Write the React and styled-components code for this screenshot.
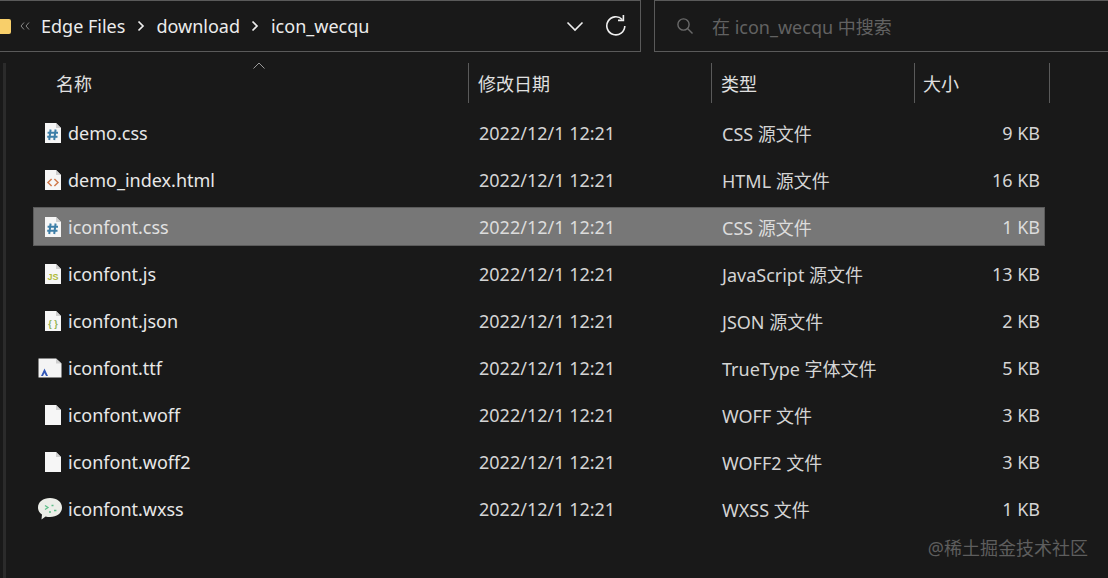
import React from "react";
import styled, { createGlobalStyle } from "styled-components";

const Global = createGlobalStyle`
  html, body { margin: 0; padding: 0; background: #191919; }
  * { box-sizing: border-box; }
`;
const FONT = `"Noto Sans", "Noto Sans CJK SC", sans-serif`;

const Page = styled.div`
  position: relative;
  width: 1108px;
  height: 578px;
  overflow: hidden;
  background: #191919;
  color: #e6e6e6;
  font-family: ${FONT};
  font-size: 18px;
`;
const Toolbar = styled.div`
  display: flex;
  gap: 13px;
  height: 52px;
`;
const AddressBar = styled.div`
  width: 641px;
  height: 52px;
  border: 1px solid #5a5a5a;
  border-left: none;
  display: flex;
  align-items: center;
  padding: 0 13px 0 0;
  margin-top: 0;
`;
const FolderMark = styled.div`
  width: 11px;
  height: 15px;
  background: #f8cf6a;
  border-radius: 0 2px 2px 0;
  margin-top: 1px;
`;
const Crumbs = styled.div`
  display: flex;
  align-items: center;
  flex: 1;
  margin-left: 9px;
`;
const Crumb = styled.span`
  font-size: 18px;
  color: #ececec;
`;
const Sep = styled.span`
  display: inline-flex;
  width: 31px;
  justify-content: center;
`;
const BackMark = styled.span`
  display: inline-flex;
  width: 21px;
`;
const ToolIcon = styled.span`
  display: inline-flex;
  margin-left: ${(p) => p.$gap || 0}px;
`;
const SearchBar = styled.div`
  flex: 1;
  height: 52px;
  border: 1px solid #5a5a5a;
  border-right: none;
  display: flex;
  align-items: center;
  padding-left: 21px;
  gap: 18px;
  color: #626262;
  font-size: 18px;
`;
const Body = styled.div`
  margin: 11px 0 0 3px;
  border-left: 3px solid #2b2b2b;
  height: 515px;
  padding-left: 24px;
  position: relative;
`;
const Grid = styled.div`
  display: grid;
  grid-template-columns: 436px 243px 203px 135px;
  width: 1017px;
  margin-left: 3px;
`;
const HeaderRow = styled(Grid)`
  height: 40px;
  margin-bottom: 10px;
  align-items: center;
`;
const HeaderCell = styled.div`
  position: relative;
  height: 40px;
  display: flex;
  align-items: center;
  color: #e0e0e0;
  padding-left: ${(p) => p.$pad || 9}px;
  border-right: 1px solid #5a5a5a;
  font-size: 18px;
`;
const SortCaret = styled.svg`
  position: absolute;
  left: 219px;
  top: -1px;
`;
const Row = styled(Grid)`
  height: 39px;
  margin-bottom: 8px;
  align-items: center;
  background: ${(p) => (p.$selected ? "#777777" : "transparent")};
  border: 1px solid ${(p) => (p.$selected ? "#5b5b5b" : "transparent")};
  width: 1012px;
  grid-template-columns: 435px 243px 203px 130px;
  color: ${(p) => (p.$selected ? "#e2e2e2" : "#e8e8e8")};
`;
const NameCell = styled.div`
  display: flex;
  align-items: center;
  padding-left: 4px;
`;
const IconSlot = styled.span`
  display: inline-flex;
  justify-content: center;
  width: 30px;
  margin-right: 0;
`;
const DateCell = styled.div`
  padding-left: 10px;
  color: ${(p) => (p.$selected ? "#dcdcdc" : "#d4d4d4")};
`;
const TypeCell = styled.div`
  padding-left: 10px;
  color: ${(p) => (p.$selected ? "#dcdcdc" : "#d4d4d4")};
`;
const SizeCell = styled.div`
  text-align: right;
  padding-right: 5px;
  color: ${(p) => (p.$selected ? "#dcdcdc" : "#d4d4d4")};
`;
const Watermark = styled.div`
  position: absolute;
  right: 20px;
  bottom: 18px;
  color: #5e5e5e;
  font-size: 18px;
  letter-spacing: 0;
`;

const Page_ = ({ children }) => (
  <svg width="18" height="22" viewBox="0 0 18 22">
    <path d="M1 1 H12 L17 6 V21 H1 Z" fill="#f6f6f6" />
    <path d="M12 1 V6 H17 Z" fill="#cfcfcf" />
    {children}
  </svg>
);
const CssIcon = () => (
  <Page_>
    <path d="M6.6 7.5 L5.2 18 M11.6 7.5 L10.2 18 M3.6 10.8 H14 M3.2 14.8 H13.5" stroke="#3e7fa8" strokeWidth="2" fill="none" />
  </Page_>
);
const HtmlIcon = () => (
  <Page_>
    <path d="M7.6 10 L4 13.5 L7.6 17 M10.4 10 L14 13.5 L10.4 17" stroke="#d07a4c" strokeWidth="1.5" fill="none" />
  </Page_>
);
const JsIcon = () => (
  <Page_>
    <text x="9" y="17" textAnchor="middle" fontFamily="Liberation Sans" fontSize="9" fontWeight="700" fill="#b0bb38">JS</text>
  </Page_>
);
const JsonIcon = () => (
  <Page_>
    <text x="9" y="17" textAnchor="middle" fontFamily="Liberation Sans" fontSize="9" fontWeight="700" fill="#8fb04a">{"{ }"}</text>
  </Page_>
);
const BlankIcon = () => <Page_ />;
const FontIcon = () => (
  <svg width="24" height="20" viewBox="0 0 24 20" style={{ marginLeft: -6 }}>
    <path d="M0.5 0.5 H18 L23.5 5.5 V19.5 H0.5 Z" fill="#f4f4f4" />
    <path d="M18 0.5 V5.5 H23.5 Z" fill="#cfcfcf" />
    <path d="M3 18 L6.5 10.5 L10 18 H8 L6.5 15 L5 18 Z" fill="#3358b8" />
  </svg>
);
const WxIcon = () => (
  <svg width="26" height="24" viewBox="0 0 26 24" style={{ marginLeft: -7 }}>
    <path d="M13 1 C20 1 25 5 25 10.5 C25 16 20 20 13 20 C11.5 20 10 19.8 8.6 19.4 L4.5 22.5 L5 17.6 C2.4 15.8 1 13.3 1 10.5 C1 5 6 1 13 1 Z" fill="#eceee8" />
    <path d="M8 8.5 L11 10.5 L8 12.5" stroke="#5fc08a" strokeWidth="1.3" fill="none" />
    <path d="M14.5 8.5 h2 M17 13.5 h2.4 M12 15 h2" stroke="#5fc08a" strokeWidth="1.4" fill="none" />
  </svg>
);

const files = [
  ["demo.css", CssIcon, "CSS 源文件", "9 KB"],
  ["demo_index.html", HtmlIcon, "HTML 源文件", "16 KB"],
  ["iconfont.css", CssIcon, "CSS 源文件", "1 KB", true],
  ["iconfont.js", JsIcon, "JavaScript 源文件", "13 KB"],
  ["iconfont.json", JsonIcon, "JSON 源文件", "2 KB"],
  ["iconfont.ttf", FontIcon, "TrueType 字体文件", "5 KB"],
  ["iconfont.woff", BlankIcon, "WOFF 文件", "3 KB"],
  ["iconfont.woff2", BlankIcon, "WOFF2 文件", "3 KB"],
  ["iconfont.wxss", WxIcon, "WXSS 文件", "1 KB"],
];

const Chevron = () => (
  <svg width="8" height="12" viewBox="0 0 8 12">
    <path d="M1.5 1.5 L6 6 L1.5 10.5" stroke="#ededed" strokeWidth="1.7" fill="none" />
  </svg>
);

export default function App() {
  return (
    <Page>
      <Global />
      <Toolbar>
        <AddressBar>
          <FolderMark />
          <Crumbs>
            <BackMark>
              <svg width="10" height="8" viewBox="0 0 10 8">
                <path d="M4 0.5 L1 4 L4 7.5 M9 0.5 L6 4 L9 7.5" stroke="#8a8a8a" strokeWidth="1" fill="none" />
              </svg>
            </BackMark>
            <Crumb>Edge Files</Crumb>
            <Sep><Chevron /></Sep>
            <Crumb>download</Crumb>
            <Sep><Chevron /></Sep>
            <Crumb>icon_wecqu</Crumb>
          </Crumbs>
          <ToolIcon>
            <svg width="18" height="11" viewBox="0 0 18 11">
              <path d="M1.5 1.5 L9 9 L16.5 1.5" stroke="#eeeeee" strokeWidth="1.6" fill="none" />
            </svg>
          </ToolIcon>
          <ToolIcon $gap={21}>
            <svg width="22" height="22" viewBox="0 0 22 22">
              <path d="M17.2 4.5 A9 9 0 1 0 19.8 11" stroke="#efefef" strokeWidth="1.6" fill="none" />
              <path d="M13 5.4 H18.4 V0" stroke="#efefef" strokeWidth="1.6" fill="none" />
            </svg>
          </ToolIcon>
        </AddressBar>
        <SearchBar>
          <svg width="18" height="18" viewBox="0 0 18 18">
            <circle cx="7.5" cy="7.5" r="5.6" stroke="#6a6a6a" strokeWidth="1.4" fill="none" />
            <path d="M11.5 11.5 L16.5 16.5" stroke="#6a6a6a" strokeWidth="1.4" />
          </svg>
          <span>在 icon_wecqu 中搜索</span>
        </SearchBar>
      </Toolbar>
      <Body>
        <HeaderRow>
          <HeaderCell $pad={23}>
            名称
            <SortCaret width="14" height="7" viewBox="0 0 14 7">
              <path d="M1.5 6.5 L7 1 L12.5 6.5" stroke="#9a9a9a" strokeWidth="1" fill="none" />
            </SortCaret>
          </HeaderCell>
          <HeaderCell>修改日期</HeaderCell>
          <HeaderCell>类型</HeaderCell>
          <HeaderCell $pad={8}>大小</HeaderCell>
        </HeaderRow>
        {files.map(([name, Icon, type, size, selected]) => (
          <Row key={name} $selected={selected}>
            <NameCell>
              <IconSlot><Icon /></IconSlot>
              <span>{name}</span>
            </NameCell>
            <DateCell $selected={selected}>2022/12/1 12:21</DateCell>
            <TypeCell $selected={selected}>{type}</TypeCell>
            <SizeCell $selected={selected}>{size}</SizeCell>
          </Row>
        ))}
      </Body>
      <Watermark>@稀土掘金技术社区</Watermark>
    </Page>
  );
}
